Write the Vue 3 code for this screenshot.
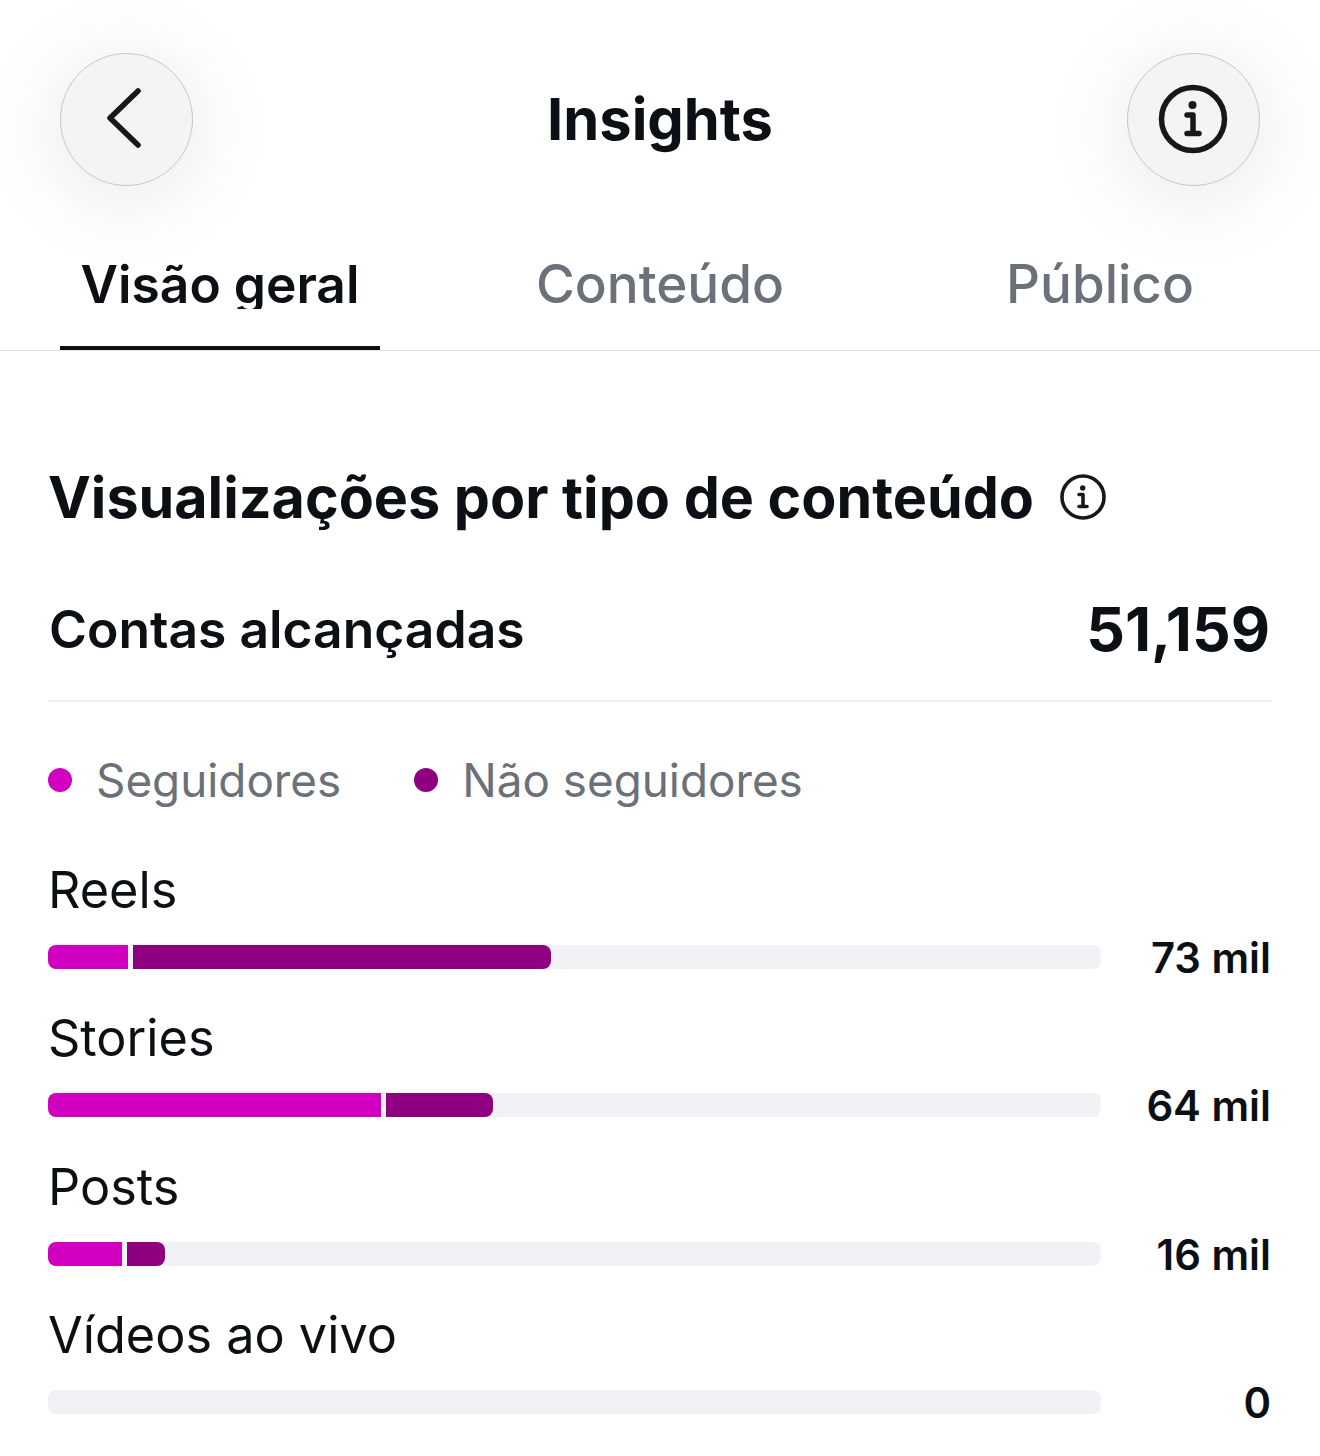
<template>
  <div class="insights-page">
    <header class="top-bar">
      <button class="round-btn">
        <svg class="back-icon" width="40" height="64" viewBox="0 0 40 64" fill="none">
          <path d="M33 4 L5 31 L33 58" stroke="#16181b" stroke-width="5.5" stroke-linecap="round" stroke-linejoin="round" />
        </svg>
      </button>
      <h1 class="page-title">Insights</h1>
      <button class="round-btn">
        <svg class="info-icon" width="70" height="70" viewBox="0 0 70 70" fill="none">
          <circle cx="35" cy="35" r="31.5" stroke="#16181b" stroke-width="5.5" />
          <circle cx="34.5" cy="21" r="4" fill="#16181b" />
          <path d="M29 31 H35 V49 M29 49.5 H41" stroke="#16181b" stroke-width="5.5" stroke-linecap="round" stroke-linejoin="round" />
        </svg>
      </button>
    </header>

    <nav class="tabs">
      <div v-for="(tab, i) in tabs" :key="tab" class="tab" :class="{ active: i === 0 }">
        <span class="tab-label">{{ tab }}</span>
      </div>
    </nav>

    <section class="content">
      <div class="section-title">
        <h2>Visualizações por tipo de conteúdo</h2>
        <svg width="46" height="46" viewBox="0 0 46 46" fill="none">
          <circle cx="23" cy="23" r="21" stroke="#16181b" stroke-width="3.6" />
          <circle cx="22.7" cy="14" r="2.7" fill="#16181b" />
          <path d="M19 20.5 H23 V32 M19 32.5 H27" stroke="#16181b" stroke-width="3.6" stroke-linecap="round" stroke-linejoin="round" />
        </svg>
      </div>

      <div class="reach-row">
        <span class="reach-label">Contas alcançadas</span>
        <span class="reach-value">51,159</span>
      </div>

      <div class="legend">
        <div class="legend-item"><i class="dot pink"></i>Seguidores</div>
        <div class="legend-item"><i class="dot purple"></i>Não seguidores</div>
      </div>

      <div class="rows">
        <div v-for="row in rows" :key="row.name" class="row">
          <div class="row-name">{{ row.name }}</div>
          <div class="bar">
            <div v-if="row.followers" class="seg pink" :style="{ width: row.followers + 'px' }"></div>
            <div v-if="row.others" class="seg purple" :style="{ width: row.others + 'px' }"></div>
          </div>
          <div class="row-value">{{ row.value }}</div>
        </div>
      </div>
    </section>
  </div>
</template>

<script setup>
const tabs = ['Visão geral', 'Conteúdo', 'Público'];

// larguras em px das barras
const rows = [
  { name: 'Reels', followers: 80, others: 418, value: '73 mil' },
  { name: 'Stories', followers: 333, others: 107, value: '64 mil' },
  { name: 'Posts', followers: 74, others: 38, value: '16 mil' },
  { name: 'Vídeos ao vivo', followers: 0, others: 0, value: '0' }
];
</script>

<style>
html, body { background: #fff; }
</style>

<style scoped>
.insights-page { width: 1320px; height: 1456px; overflow: hidden; background: #fff; font-family: Inter, "Liberation Sans", sans-serif; color: #0c1014; }
.top-bar { display: flex; align-items: center; justify-content: space-between; padding: 53px 60px 0; }
.round-btn { width: 133px; height: 133px; box-sizing: border-box; display: flex; align-items: center; justify-content: center; padding: 0; border: 1px solid #c8c8c8; border-radius: 50%; background: #f4f4f4; box-shadow: 0 10px 90px rgba(0, 0, 0, 0.1); }
.back-icon { margin: -2px 0 0 -3px; }
.info-icon { margin-top: -2px; }
.page-title { margin: -2px 0 0; font-size: 57.8px; line-height: 66px; font-weight: 650; }

.tabs { display: grid; grid-template-columns: repeat(3, 440px); height: 164px; border-bottom: 1px solid #e3e3e5; }
.tab { display: flex; justify-content: center; align-items: flex-start; width: 320px; height: 164px; margin: 0 auto; padding-top: 68px; box-sizing: border-box; color: #6b7079; font-size: 53px; line-height: 60px; font-weight: 550; }
.tab-label { height: 55px; overflow: hidden; }
.tab.active { color: #0c1014; font-size: 51.5px; font-weight: 600; border-bottom: 4px solid #0c1014; }

.content { padding: 0 48px; }
.section-title { display: flex; align-items: center; gap: 26px; height: 70px; margin-top: 111px; }
.section-title h2 { margin: 0; font-size: 57.4px; line-height: 70px; font-weight: 700; white-space: nowrap; }

.reach-row { display: flex; align-items: center; justify-content: space-between; height: 137px; margin-top: 33px; padding: 0 2px 8px 1px; box-sizing: border-box; border-bottom: 2px solid #f0f0f3; }
.reach-label { font-size: 51.6px; font-weight: 580; line-height: 64px; }
.reach-value { font-size: 60.6px; font-weight: 700; line-height: 64px; }

.legend { display: flex; gap: 73px; margin-top: 48px; height: 60px; align-items: center; color: #6b7079; font-size: 45.8px; }
.legend-item { display: flex; align-items: center; gap: 24px; }
.dot { width: 24px; height: 24px; border-radius: 50%; display: block; }
.pink { background: #d100c0; }
.purple { background: #8f0080; }

.rows { margin-top: 48px; }
.row { display: grid; grid-template-columns: 1053px 1fr; grid-template-rows: 64px 24px; row-gap: 23px; height: 148.3px; }
.row-name { grid-column: 1 / 3; font-size: 50.4px; line-height: 64px; color: #0c1014; font-weight: 400; }
.bar { display: flex; gap: 5px; height: 24px; border-radius: 8px; overflow: hidden; background: #f1f2f6; }
.seg { height: 24px; }
.seg:last-child { border-radius: 0 8px 8px 0; }
.row-value { text-align: right; font-size: 41.8px; line-height: 26px; font-weight: 600; color: #0c1014; padding-right: 1px; }
</style>
